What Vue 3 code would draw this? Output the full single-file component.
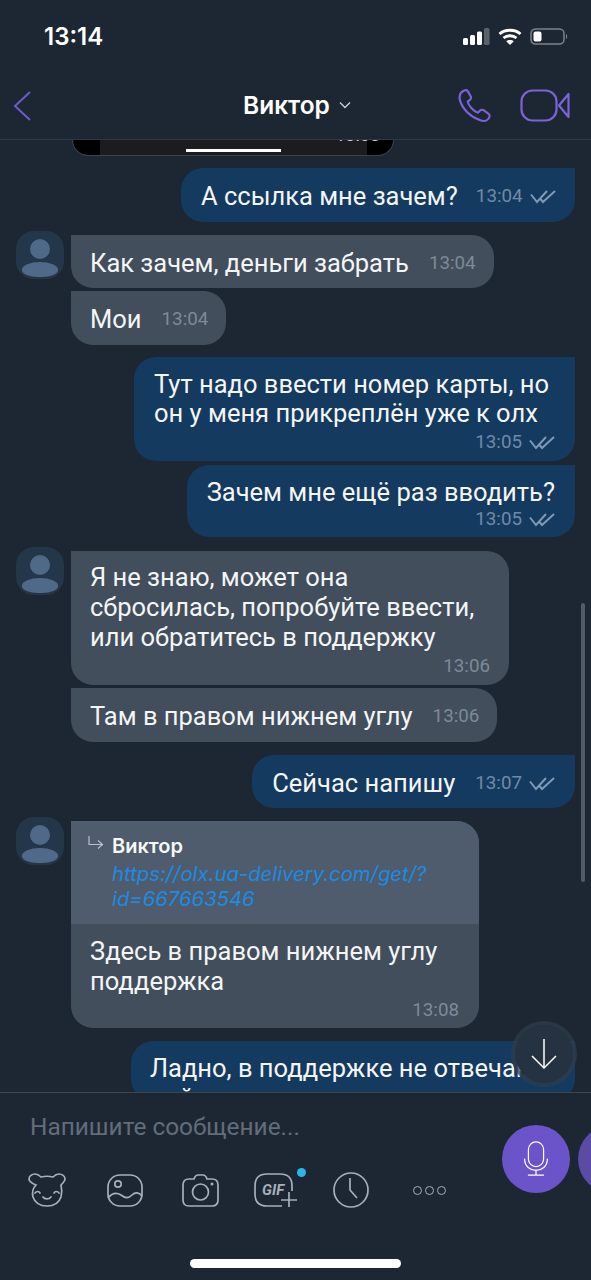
<script setup>
const ticks = 'M1 6.500l6 7.500L17 3M10.500 11l2.500 3L25 3';
</script>

<template>
  <div class="screen">
    <header class="top">
      <div class="status">
        <span class="clock">13:14</span>
        <div class="status-icons">
          <svg width="27" height="17" viewBox="0 0 27 17">
            <rect x="0" y="10" width="5" height="7" rx="1.500" fill="#fff" />
            <rect x="7" y="7" width="5" height="10" rx="1.500" fill="#fff" />
            <rect x="14" y="3.500" width="5" height="13.500" rx="1.500" fill="#fff" />
            <rect x="21" y="0" width="5.500" height="17" rx="1.500" fill="#5a626c" />
          </svg>
          <svg width="24" height="17" viewBox="0 0 24 17" fill="none" stroke="#fff" stroke-width="2.800">
            <path d="M1.500 6C7 1 17 1 22.500 6" />
            <path d="M5.500 10c3.500-3 9.500-3 13 0" />
            <path d="M12 17l-3.800-3.800c2-1.700 5.600-1.700 7.600 0z" fill="#fff" stroke="none" />
          </svg>
          <svg width="38" height="17" viewBox="0 0 38 17" fill="none">
            <rect x="1" y="1" width="33" height="15" rx="4.500" stroke="#7c838b" stroke-width="1.500" />
            <rect x="3.500" y="3.500" width="8" height="10" rx="2" fill="#fff" />
            <path d="M36 6c1.500.5 1.500 4.500 0 5z" fill="#7c838b" />
          </svg>
        </div>
      </div>
      <div class="nav">
        <svg class="back" width="20" height="32" viewBox="0 0 20 32" fill="none" stroke="#6e5acb" stroke-width="2">
          <path d="M18 2L3 16l15 14" />
        </svg>
        <div class="title">
          <span>Виктор</span>
          <svg width="12" height="8" viewBox="0 0 12 8" fill="none" stroke="#c9ced4" stroke-width="1.400">
            <path d="M1 1.500l5 5 5-5" />
          </svg>
        </div>
        <div class="nav-actions">
          <svg width="34" height="35" viewBox="0 0 34 36" fill="none" stroke="#7b63d8" stroke-width="2.200" stroke-linejoin="round">
            <path d="M3 4.500c2.500-2.500 5-3 6.500-1.500l3 5.500c.8 1.500.3 3-1 4l-2 1.500c1 4.500 6 10 10.500 11.500l2-2c1.200-1.200 2.800-1.400 4.200-.5l4.800 3.500c1.500 1.300 1.300 3.500-.5 5.500-2 2.200-5 2.300-8 1.200C12 29.500 4 21.500 1.500 12.500.8 9.500 1 6.500 3 4.500z" />
          </svg>
          <svg width="50" height="33" viewBox="0 0 50 33" fill="none" stroke="#7b63d8" stroke-width="2.200" stroke-linejoin="round">
            <rect x="1.500" y="1.500" width="35" height="30" rx="11" />
            <path d="M48.500 5v23L39 16.500z" />
          </svg>
        </div>
      </div>
    </header>

    <main class="chat">
      <div class="media-stub">
        <div class="media-inner">
          <span class="media-bar"></span>
        </div>
        <span class="media-time">13:03</span>
      </div>

      <div class="msg out first-out">
        <span>А ссылка мне зачем?</span>
        <span class="meta">13:04
          <svg width="26" height="16" viewBox="0 0 26 16" fill="none" stroke="#7f9ab5" stroke-width="2"><path :d="ticks" /></svg>
        </span>
      </div>

      <div class="row group">
        <div class="avatar"><i class="avatar-head"></i><i class="avatar-body"></i></div>
        <div class="msg in tight">
          <span>Как зачем, деньги забрать</span>
          <span class="meta">13:04</span>
        </div>
      </div>
      <div class="row follow">
        <div class="msg in">
          <span>Мои</span>
          <span class="meta">13:04</span>
        </div>
      </div>

      <div class="msg out block section two-line">
        <p>Тут надо ввести номер карты, но<br />он у меня прикреплён уже к олх</p>
        <span class="meta end">13:05
          <svg width="26" height="16" viewBox="0 0 26 16" fill="none" stroke="#7f9ab5" stroke-width="2"><path :d="ticks" /></svg>
        </span>
      </div>
      <div class="msg out block follow-out">
        <p>Зачем мне ещё раз вводить?</p>
        <span class="meta end">13:05
          <svg width="26" height="16" viewBox="0 0 26 16" fill="none" stroke="#7f9ab5" stroke-width="2"><path :d="ticks" /></svg>
        </span>
      </div>

      <div class="row group group-lg">
        <div class="avatar"><i class="avatar-head"></i><i class="avatar-body"></i></div>
        <div class="msg in block wide">
          <p>Я не знаю, может она<br />сбросилась, попробуйте ввести,<br />или обратитесь в поддержку</p>
          <span class="meta end">13:06</span>
        </div>
      </div>
      <div class="row follow">
        <div class="msg in">
          <span>Там в правом нижнем углу</span>
          <span class="meta">13:06</span>
        </div>
      </div>

      <div class="msg out section section-lg tight">
        <span>Сейчас напишу</span>
        <span class="meta">13:07
          <svg width="26" height="16" viewBox="0 0 26 16" fill="none" stroke="#7f9ab5" stroke-width="2"><path :d="ticks" /></svg>
        </span>
      </div>

      <div class="row group">
        <div class="avatar"><i class="avatar-head"></i><i class="avatar-body"></i></div>
        <div class="msg in reply">
          <div class="quote">
            <svg class="quote-arrow" width="16" height="14" viewBox="0 0 16 14" fill="none" stroke="#b9c1cb" stroke-width="1.200">
              <path d="M1 0v8.500h13M10 4.500l4.500 4-4.500 4" />
            </svg>
            <div>
              <div class="quote-name">Виктор</div>
              <div class="quote-link">https://olx.ua-delivery.com/get/?<br />id=667663546</div>
            </div>
          </div>
          <div class="reply-body">
            <p>Здесь в правом нижнем углу<br />поддержка</p>
            <span class="meta end">13:08</span>
          </div>
        </div>
      </div>

      <div class="msg out block section section-lg last">
        <p>Ладно, в поддержке не отвечают<br />пойду</p>
      </div>

      <div class="scroll-track"></div>
      <div class="scroll-down">
        <svg width="30" height="34" viewBox="0 0 30 34" fill="none" stroke="#fff" stroke-width="1.500">
          <path d="M15 2v29M3 19l12 12 12-12" />
        </svg>
      </div>
    </main>

    <footer class="composer">
      <div class="composer-main">
        <div class="composer-left">
          <div class="placeholder">Напишите сообщение...</div>
          <div class="tools">
            <svg width="38" height="34" viewBox="0 0 38 34" fill="none" stroke="#a7afb8" stroke-width="1.700" stroke-linecap="round">
              <path d="M8 12C3 10 1 8 1 6c0-3 3-5 6-5 3 0 5 2 6 3 4-1 8-1 12 0 1-1 3-3 6-3 3 0 6 2 6 5 0 2-2 4-4 6 1 4 1 8 0 12-2 6-7 9-14 9S7 30 5 24c-1-4-1-8 3-12z" />
              <path d="M7 20c1.500-2 4-2 5 0M26 20c1-2 3.500-2 5 0M15 24c1.500 2.500 6 2.500 8 0" />
            </svg>
            <svg width="36" height="33" viewBox="0 0 36 33" fill="none" stroke="#a7afb8" stroke-width="1.700">
              <rect x="1" y="1" width="34" height="31" rx="12" />
              <circle cx="11" cy="10" r="3.200" />
              <path d="M1 24C5 19 9 18 14 21c4 3 7 4 11 0 3-3 7-3 10 1" />
            </svg>
            <svg width="37" height="33" viewBox="0 0 37 33" fill="none" stroke="#a7afb8" stroke-width="1.700">
              <path d="M12 5c1-3 2-4 4-4h5c2 0 3 1 4 4h5c4 0 6 2 6 6v15c0 4-2 6-6 6H7c-4 0-6-2-6-6V11c0-4 2-6 6-6z" />
              <circle cx="18.500" cy="18" r="8" />
              <circle cx="30" cy="10" r="1.500" fill="#a7afb8" stroke="none" />
            </svg>
            <div class="gif">
              <svg width="44" height="35" viewBox="0 0 44 35" fill="none" stroke="#a7afb8" stroke-width="1.700">
                <path d="M38 18v-5C38 5 34 1 26 1H13C5 1 1 5 1 13v8c0 8 4 12 12 12h15" />
                <path d="M27 27h16M35 19v15" />
              </svg>
              <span class="gif-label">GIF</span>
              <i class="gif-dot"></i>
            </div>
            <svg width="36" height="36" viewBox="0 0 36 36" fill="none" stroke="#a7afb8" stroke-width="1.700">
              <circle cx="18" cy="18" r="17" />
              <path d="M17 6v12l7 8" />
            </svg>
            <div class="more"><i></i><i></i><i></i></div>
          </div>
        </div>
        <div class="composer-btns">
          <div class="mic">
            <svg width="28" height="36" viewBox="0 0 28 38" fill="none" stroke="#fff" stroke-width="1.300" stroke-linecap="round">
              <rect x="6" y="1" width="16" height="26" rx="8" />
              <path d="M2 19c0 16 24 16 24 0M14 31v5M6 36h16" />
            </svg>
          </div>
          <div class="second-btn"></div>
        </div>
      </div>
      <div class="home-bar"></div>
    </footer>
  </div>
</template>

<style>
html,
body {
  margin: 0;
  background: #1d2733;
}
</style>

<style scoped>
.screen {
  width: 591px;
  height: 1280px;
  display: flex;
  flex-direction: column;
  overflow: hidden;
  background: #1d2733;
  color: #f3f5f7;
  font-family: Roboto, "Liberation Sans", sans-serif;
}

.top {
  height: 140px;
  flex: none;
  box-sizing: border-box;
  border-bottom: 1px solid #2f3945;
}

.status {
  height: 72px;
  padding: 0 23px 0 44px;
  display: flex;
  align-items: center;
  justify-content: space-between;
}

.clock {
  font-family: Inter, sans-serif;
  font-size: 24px;
  font-weight: 600;
  color: #fff;
  padding-top: 1px;
}

.status-icons {
  display: flex;
  align-items: center;
  gap: 8px;
}

.nav {
  height: 67px;
  padding: 0 21px 0 12px;
  display: flex;
  align-items: center;
  justify-content: space-between;
  position: relative;
}

.back {
  display: block;
}

.title {
  position: absolute;
  left: 243px;
  top: 18px;
  display: flex;
  align-items: center;
  gap: 9px;
  font-family: Inter, sans-serif;
  font-size: 24.500px;
  font-weight: 600;
  color: #fff;
}

.nav-actions {
  display: flex;
  align-items: center;
  gap: 28px;
}

.chat {
  flex: 1;
  min-height: 0;
  position: relative;
  overflow: hidden;
  display: flex;
  flex-direction: column;
  align-items: flex-end;
  padding: 0 16px;
}

.media-stub {
  width: 322px;
  height: 16px;
  flex: none;
  align-self: flex-start;
  margin-left: 56px;
  background: #000;
  border-radius: 0 0 24px 24px;
  border: 1px solid #3a4450;
  border-top: 0;
  box-sizing: border-box;
  display: flex;
  justify-content: center;
  overflow: hidden;
  position: relative;
}

.media-inner {
  width: 267px;
  background: #1c1c1e;
  position: relative;
}

.media-time {
  position: absolute;
  right: 13px;
  top: -14px;
  font-size: 18px;
  line-height: 18px;
  color: #c6c9cc;
}

.media-bar {
  position: absolute;
  left: 86px;
  top: 9px;
  width: 95px;
  height: 3px;
  background: #fff;
}

.msg {
  box-sizing: border-box;
  font-size: 25.500px;
  line-height: 30px;
  color: #f3f5f7;
  flex: none;
  white-space: nowrap;
}

.msg p {
  margin: 0;
}

.out {
  background: #143a60;
  border-radius: 22px 0 22px 22px;
}

.in {
  background: #424e5c;
  border-radius: 0 22px 22px 22px;
}

.msg:not(.block):not(.reply) {
  height: 54px;
  padding: 2px 18px 0 19px;
  display: flex;
  align-items: center;
  gap: 20px;
}

.msg.tight:not(.block):not(.reply) {
  height: 53px;
}

.msg.out:not(.block) {
  padding-right: 20px;
  padding-left: 20px;
}

.msg.first-out:not(.block) {
  width: 394px;
  margin-top: 12px;
  gap: 18px;
}

.section {
  margin-top: 12px;
}

.section-lg {
  margin-top: 13px;
}

.follow-out {
  margin-top: 4px;
}

.block {
  padding: 12px 20px 7px;
}

.two-line {
  width: 441px;
  padding-top: 13px;
  padding-bottom: 8px;
  line-height: 29px;
}

.two-line .meta.end {
  margin-top: 3px;
}

.meta {
  display: inline-flex;
  align-items: center;
  gap: 7px;
  font-size: 18.800px;
  line-height: 22px;
  color: #7d8a98;
}

.out .meta {
  color: #6f8aa6;
}

.meta.end {
  display: flex;
  justify-content: flex-end;
  height: 22px;
  margin-top: 1px;
}

.row {
  width: 100%;
  box-sizing: border-box;
  display: flex;
  align-items: flex-start;
  gap: 7px;
  flex: none;
}

.group {
  margin-top: 13px;
}

.group-lg {
  margin-top: 14px;
}

.follow {
  margin-top: 3px;
  padding-left: 55px;
}

.avatar {
  width: 48px;
  height: 48px;
  margin-top: -4px;
  flex: none;
  border-radius: 18px;
  background: #24364a;
  position: relative;
  overflow: hidden;
}

.avatar-head {
  position: absolute;
  left: 14px;
  top: 8px;
  width: 20px;
  height: 20px;
  border-radius: 50%;
  background: #4f6a88;
}

.avatar-body {
  position: absolute;
  left: 6px;
  top: 31px;
  width: 36px;
  height: 15px;
  border-radius: 50% 50% 45% 45%;
  background: #4f6a88;
}

.wide {
  width: 438px;
  height: 134px;
  padding: 11px 19px 0;
}

.wide .meta.end {
  margin-top: 3px;
}

.reply {
  width: 408px;
  overflow: hidden;
}

.quote {
  height: 103px;
  box-sizing: border-box;
  background: #4e5c6d;
  padding: 12px 20px 0 17px;
  display: flex;
  gap: 8px;
}

.quote-arrow {
  margin-top: 3px;
  flex: none;
}

.quote-name {
  font-family: Inter, sans-serif;
  font-size: 20px;
  font-weight: 600;
  line-height: 26px;
  color: #f6f7f9;
}

.quote-link {
  font-family: Inter, sans-serif;
  font-size: 20.300px;
  font-style: italic;
  line-height: 25px;
  margin-top: 2px;
  color: #1f8ae0;
}

.reply-body {
  height: 104px;
  box-sizing: border-box;
  padding: 12px 20px 0 19px;
}

.reply-body .meta.end {
  margin-top: 3px;
}

.last {
  width: 444px;
  height: 60px;
  padding-left: 19px;
}

.scroll-track {
  position: absolute;
  right: 6px;
  top: 463px;
  width: 4px;
  height: 279px;
  border-radius: 2px;
  background: #525c68;
}

.scroll-down {
  position: absolute;
  left: 511px;
  top: 881px;
  width: 66px;
  height: 66px;
  box-sizing: border-box;
  border-radius: 50%;
  background: #253241;
  background-clip: padding-box;
  border: 4px solid rgba(48, 60, 74, 0.75);
  display: flex;
  align-items: center;
  justify-content: center;
}

.composer {
  height: 188px;
  flex: none;
  box-sizing: border-box;
  border-top: 1px solid #3a4551;
  background: #1d2733;
  position: relative;
  z-index: 1;
}

.composer-main {
  display: flex;
  justify-content: space-between;
  height: 162px;
}

.composer-left {
  padding: 19px 0 0 28px;
}

.placeholder {
  padding-left: 2px;
  font-size: 24.400px;
  line-height: 30px;
  color: #626d79;
}

.tools {
  margin-top: 30px;
  display: grid;
  grid-template-columns: 79px 75px 72px 79px 80px auto;
  align-items: center;
}

.tools > svg {
  display: block;
}

.gif {
  position: relative;
  width: 44px;
  height: 35px;
}

.gif-label {
  position: absolute;
  left: 8px;
  top: 9px;
  font-size: 15px;
  line-height: 17px;
  font-weight: 700;
  font-style: italic;
  color: #a7afb8;
}

.gif-dot {
  position: absolute;
  left: 43px;
  top: -5px;
  width: 9px;
  height: 9px;
  border-radius: 50%;
  background: #2cb4ea;
}

.more {
  display: flex;
  gap: 3px;
}

.more i {
  width: 9px;
  height: 9px;
  box-sizing: border-box;
  border: 1.700px solid #a7afb8;
  border-radius: 50%;
}

.composer-btns {
  display: flex;
  gap: 8px;
  padding-top: 32px;
  margin-right: -27px;
}

.mic {
  width: 68px;
  height: 68px;
  border-radius: 50%;
  background: #6b53c9;
  display: flex;
  align-items: center;
  justify-content: center;
}

.second-btn {
  width: 40px;
  height: 68px;
  border-radius: 34px 0 0 34px;
  background: #5c4ba5;
}

.home-bar {
  width: 211px;
  height: 9px;
  margin: 4px auto 0;
  border-radius: 5px;
  background: #fff;
}
</style>
